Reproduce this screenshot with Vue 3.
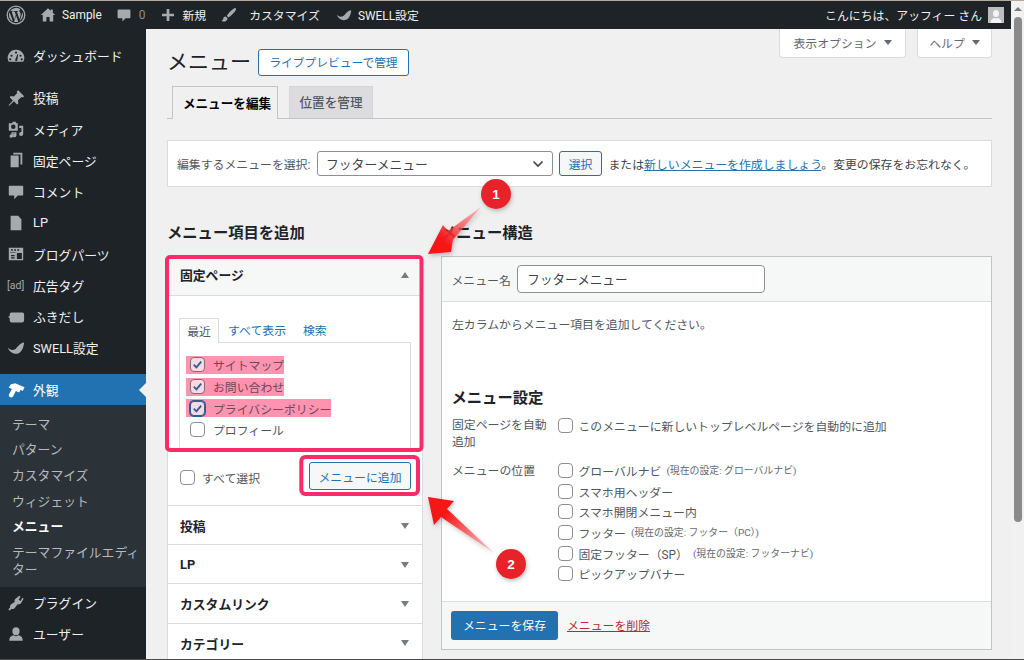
<script setup>
const icons = {
  dash: 'M10 3a9 9 0 0 0-8 13.500h16A9 9 0 0 0 10 3zM5 8.500a1.200 1.200 0 1 1 0 2.400 1.200 1.200 0 0 1 0-2.400zM10 5a1.200 1.200 0 1 1 0 2.400A1.200 1.200 0 0 1 10 5zM15 8.500a1.200 1.200 0 1 1 0 2.400 1.200 1.200 0 0 1 0-2.400zM3.600 12.500a1.200 1.200 0 1 1 0 2.400 1.200 1.200 0 0 1 0-2.400zM16.400 12.500a1.200 1.200 0 1 1 0 2.400 1.200 1.200 0 0 1 0-2.400zM9 14.500l2.600-6.500.8.300-1 6.700a1.300 1.300 0 0 1-2.400-.5z',
  pin: 'M12.500 1.500L19 8l-1.500 1.500-1.500-.7-3.800 3.700.3 3.500-1.300 1.200-3.500-3.500L2.500 18.500 1.800 18l4.700-5.300L3 9.200l1.200-1.300 3.500.3 3.700-3.800-.7-1.500z',
  media: 'M2 3.500h3.500l1-1.500h3l1 1.500H12v8.500H2zM7 5a2.500 2.500 0 1 0 0 5 2.500 2.500 0 0 0 0-5zM13.500 6.500H18v9a2.300 2.300 0 1 1-2-2.200V9h-2.500zM5 13.500h5.500v3.800a2 2 0 1 1-1.800-2V15H6.800v2.800a2 2 0 1 1-1.800-2z',
  pages: 'M7 2h10v13h-2V4H7zM4 5h9v13H4z',
  comment: 'M3 3h14a1 1 0 0 1 1 1v9a1 1 0 0 1-1 1h-5l-4 4v-4H3a1 1 0 0 1-1-1V4a1 1 0 0 1 1-1z',
  page: 'M4 2h8.500L16 6v12H4z',
  parts: 'M2 3h16v14H2zM4.500 4.800v1.700h2V4.800zM8 4.800v1.700h2V4.800zM11.500 4.800v1.700h2V4.800zM3.500 8v.5h6V8zM11 9v6.500h5.500V9zM4.500 11v1.500h4V11zM4.500 13.500V15h4v-1.500z',
  balloon: 'M5 5h12a2 2 0 0 1 2 2v7a2 2 0 0 1-2 2H5a2 2 0 0 1-2-2v-3l-2-1 2-1V7a2 2 0 0 1 2-2z',
  swell: 'M1 9.500c2 3 6 3.500 8.500 1.500S14 4.500 19 4c-.5 5.500-2.500 10.500-6.500 12C8 17.500 2.500 15 1 9.500z',
  hammer: 'M9 2.500L19.500 7l-2 4-2.500-1.200-1.500 3L9.800 11 7 16.800c-.6 1.300-1.900 1.800-3.200 1.200-1.600-.7-2.200-2-1.500-3.300L5.500 9 2 7.300 4 3.800z',
  plugin: 'M13.500 2l1.500 1-2 3.500 2 1.200 2-3.500 1.500 1-2.200 3.800c-.6 2-2.500 3-4.500 2.500L9 15c-1 1.500-2.500 2-4 1.500L3 18.500 1.500 17l2-2c-.5-1.500 0-3 1.500-4l3.500-2.200c-.5-2 .5-3.500 2.500-4.500z',
  user: 'M10 2.500a4 4.500 0 1 1 0 9 4 4.500 0 0 1 0-9zM7 11.500c2 1.200 4 1.200 6 0 3 .8 4.500 2.500 4.500 6H2.500c0-3.500 1.500-5.200 4.500-6z',
  home: 'M10 1.500l3.500 3.300V3h2.500v4.200L19 10h-2.500v8h-4.500v-5.500H8V18H3.500v-8H1z',
  plus: 'M8.300 2.500h3.400v5.800h5.800v3.400h-5.800v5.800H8.300v-5.800H2.500V8.300h5.800z',
  brush: 'M18 1.500c-3.500 2-7.500 6-9.500 9.500l2 2c3.500-2 7.500-6 9.500-9.500.6-1.200-.8-2.600-2-2zM7.500 12c-2.500 0-3.500 1.500-3.500 3 0 1-1 2-2.500 2 2.500 2.500 7.500 1.500 8-2.500z'
}
const topMenu = [
  { i: 'dash', t: 'ダッシュボード', cls: 'first' },
  { i: 'pin', t: '投稿', cls: 'gap' },
  { i: 'media', t: 'メディア' },
  { i: 'pages', t: '固定ページ' },
  { i: 'comment', t: 'コメント' },
  { i: 'page', t: 'LP' },
  { i: 'parts', t: 'ブログパーツ' },
  { i: 'ad', t: '広告タグ' },
  { i: 'balloon', t: 'ふきだし' },
  { i: 'swell', t: 'SWELL設定' }
]
const subMenu = ['テーマ', 'パターン', 'カスタマイズ', 'ウィジェット', 'メニュー', 'テーマファイルエディター']
const pageItems = [
  { t: 'サイトマップ', mark: true, on: true },
  { t: 'お問い合わせ', mark: true, on: true },
  { t: 'プライバシーポリシー', mark: true, on: true, focus: true },
  { t: 'プロフィール', mark: false, on: false }
]
const accItems = ['投稿', 'LP', 'カスタムリンク', 'カテゴリー']
const locations = [
  { t: 'グローバルナビ', n: '(現在の設定: グローバルナビ)' },
  { t: 'スマホ用ヘッダー' },
  { t: 'スマホ開閉メニュー内' },
  { t: 'フッター', n: '(現在の設定: フッター（PC）)' },
  { t: '固定フッター（SP）', n: '(現在の設定: フッターナビ)' },
  { t: 'ピックアップバナー' }
]
</script>

<template>
  <div class="app">
    <div class="frame-top"></div>
    <div class="window">
      <div class="viewport">
        <header class="adminbar">
          <svg class="wp" viewBox="0 0 20 20">
            <circle cx="10" cy="10" r="8.800" fill="none" stroke="#a7aaad" stroke-width="1.300" />
            <path fill="#a7aaad" d="M3 10a7 7 0 0 0 3.900 6.300L3.600 7.200A7 7 0 0 0 3 10zM14.700 9.600c0-.9-.3-1.500-.6-2-.4-.6-.7-1.100-.7-1.700 0-.7.500-1.300 1.200-1.300h.1A7 7 0 0 0 4.100 6.200h.5c.7 0 1.900-.1 1.900-.1.400 0 .4.500 0 .6l-.8.100 2.600 7.600 1.500-4.600-1.100-3-.8-.1c-.4 0-.3-.6 0-.6 0 0 1.200.1 1.900.1s1.900-.1 1.900-.1c.4 0 .4.500 0 .6l-.8.100 2.500 7.500.7-2.400c.3-1 .6-1.700.6-2.300zM10.100 10.700L8 16.800a7 7 0 0 0 4.300-.1l-.1-.1zM16.100 6.700l.1.700c0 .7-.1 1.500-.5 2.500l-2.100 6.100a7 7 0 0 0 2.500-9.300z" />
          </svg>
          <svg class="ab-ic home" viewBox="0 0 20 20"><path :d="icons.home" /></svg>
          <span class="ab-t site">Sample</span>
          <svg class="ab-ic cmt" viewBox="0 0 20 20"><path :d="icons.comment" /></svg>
          <span class="ab-t zero">0</span>
          <svg class="ab-ic plus" viewBox="0 0 20 20"><path :d="icons.plus" /></svg>
          <span class="ab-t">新規</span>
          <svg class="ab-ic brush" viewBox="0 0 20 20"><path :d="icons.brush" /></svg>
          <span class="ab-t">カスタマイズ</span>
          <svg class="ab-ic swell" viewBox="0 0 20 20"><path :d="icons.swell" /></svg>
          <span class="ab-t">SWELL設定</span>
          <span class="ab-t hello">こんにちは、アッフィー さん</span>
          <span class="avatar">
            <svg viewBox="0 0 16 16"><rect width="16" height="16" fill="#bdbdbd" /><path fill="#f4f4f4" d="M8 3a3 3.500 0 1 1 0 7 3 3.500 0 0 1 0-7zM2.500 16c0-3 2-4.500 3.500-5 1.300.6 2.700.6 4 0 1.500.5 3.500 2 3.500 5z" /></svg>
          </span>
        </header>

        <div class="wrap">
          <aside class="sidebar">
            <div v-for="m in topMenu" :key="m.t" class="side-row" :class="m.cls">
              <span v-if="m.i === 'ad'" class="ad-ic">[ad]</span>
              <svg v-else class="side-ic" viewBox="0 0 20 20"><path :d="icons[m.i]" fill-rule="evenodd" /></svg>
              <span>{{ m.t }}</span>
            </div>
            <div class="side-row active">
              <svg class="side-ic" viewBox="0 0 20 20"><path :d="icons.hammer" /></svg>
              <span>外観</span>
              <i class="notch"></i>
            </div>
            <div class="submenu">
              <div v-for="s in subMenu" :key="s" class="sub-row" :class="{ cur: s === 'メニュー' }">{{ s }}</div>
            </div>
            <div class="side-row">
              <svg class="side-ic" viewBox="0 0 20 20"><path :d="icons.plugin" /></svg>
              <span>プラグイン</span>
            </div>
            <div class="side-row">
              <svg class="side-ic" viewBox="0 0 20 20"><path :d="icons.user" /></svg>
              <span>ユーザー</span>
            </div>
          </aside>

          <main class="main">
            <div class="screen-row">
              <span class="screen-btn">表示オプション<i class="caret"></i></span>
              <span class="screen-btn help">ヘルプ<i class="caret"></i></span>
            </div>
            <div class="title-row">
              <h1>メニュー</h1>
              <span class="outline-btn live">ライブプレビューで管理</span>
            </div>
            <nav class="tabs">
              <span class="tab on">メニューを編集</span>
              <span class="tab">位置を管理</span>
            </nav>
            <section class="manage">
              <span class="m-label">編集するメニューを選択:</span>
              <span class="select">フッターメニュー
                <svg viewBox="0 0 12 8"><path d="M1.500 1.500L6 6l4.500-4.500" fill="none" stroke="#3c434a" stroke-width="1.600" /></svg>
              </span>
              <span class="outline-btn small">選択</span>
              <span class="m-note">または<a>新しいメニューを作成しましょう</a>。変更の保存をお忘れなく。</span>
            </section>

            <div class="cols">
              <div class="left">
                <h2>メニュー項目を追加</h2>
                <div class="acc">
                  <div class="acc-head open">固定ページ<i class="tri up"></i></div>
                  <div class="acc-body">
                    <div class="in-tabs">
                      <span class="in-tab on">最近</span>
                      <a class="in-link">すべて表示</a>
                      <a class="in-link last">検索</a>
                    </div>
                    <div class="in-panel">
                      <div v-for="p in pageItems" :key="p.t" class="pick">
                        <span class="pick-in" :class="{ mark: p.mark }">
                          <span class="cb" :class="{ focus: p.focus, clear: p.mark }">
                            <svg v-if="p.on" viewBox="0 0 14 14"><path d="M3 7.200l2.800 2.800L11 4" fill="none" stroke="#2b5f96" stroke-width="2" /></svg>
                          </span>
                          {{ p.t }}
                        </span>
                      </div>
                    </div>
                    <div class="add-row">
                      <span class="all"><span class="cb"></span>すべて選択</span>
                      <span class="outline-btn add">メニューに追加</span>
                    </div>
                  </div>
                  <div v-for="a in accItems" :key="a" class="acc-head closed">{{ a }}<i class="tri"></i></div>
                </div>
              </div>

              <div class="right">
                <h2>メニュー構造</h2>
                <div class="box">
                  <div class="box-head">
                    <span>メニュー名</span>
                    <span class="name-input">フッターメニュー</span>
                  </div>
                  <p class="hint">左カラムからメニュー項目を追加してください。</p>
                  <h3>メニュー設定</h3>
                  <div class="setting auto">
                    <div class="s-label">固定ページを自動追加</div>
                    <div class="s-line"><span class="cb"></span>このメニューに新しいトップレベルページを自動的に追加</div>
                  </div>
                  <div class="setting">
                    <div class="s-label loc">メニューの位置</div>
                    <div>
                      <div v-for="l in locations" :key="l.t" class="s-line rowed">
                        <span class="cb"></span><span>{{ l.t }}</span><small v-if="l.n">{{ l.n }}</small>
                      </div>
                    </div>
                  </div>
                  <div class="box-foot">
                    <span class="save">メニューを保存</span>
                    <a class="del">メニューを削除</a>
                  </div>
                </div>
              </div>
            </div>
          </main>
        </div>
      </div>
      <div class="scrollbar">
        <i class="sb-up"></i>
        <i class="sb-thumb"></i>
      </div>
    </div>
    <div class="frame-bottom"></div>

    <svg class="marks" viewBox="0 0 1024 660">
      <defs>
        <linearGradient id="a1" gradientUnits="userSpaceOnUse" x1="430" y1="253" x2="482" y2="206">
          <stop offset="0.25" stop-color="#f71316" />
          <stop offset="0.55" stop-color="#f4474a" stop-opacity="0.75" />
          <stop offset="1" stop-color="#f7b3b5" stop-opacity="0.8" />
        </linearGradient>
        <linearGradient id="a2" gradientUnits="userSpaceOnUse" x1="430" y1="498" x2="495" y2="553">
          <stop offset="0.25" stop-color="#f71316" />
          <stop offset="1" stop-color="#f7c3c5" stop-opacity="0.85" />
        </linearGradient>
        <filter id="sh" x="-30%" y="-30%" width="160%" height="160%">
          <feDropShadow dx="1" dy="2" stdDeviation="2" flood-color="#000" flood-opacity="0.25" />
        </filter>
      </defs>
      <rect x="167" y="257" width="254.500" height="193" rx="3" class="hl" />
      <rect x="301.300" y="457" width="116.700" height="37" rx="4" class="hl" />
      <polygon points="428,254 443,225 448,231 481,207 453,240 451,252" fill="url(#a1)" filter="url(#sh)" />
      <polygon points="428,497 454,501 447,509 494,553 441,517 434,525" fill="url(#a2)" filter="url(#sh)" />
      <circle cx="496" cy="194" r="15" fill="#e8242c" filter="url(#sh)" />
      <circle cx="511" cy="564" r="15" fill="#e8242c" filter="url(#sh)" />
      <text x="496" y="199" class="num">1</text>
      <text x="511" y="569" class="num">2</text>
    </svg>
  </div>
</template>

<style>
html, body { margin: 0; background: #f0f0f1; }
</style>

<style scoped>
.app {
  width: 1024px; height: 660px; position: relative; overflow: hidden;
  display: flex; flex-direction: column; background: #f0f0f1;
  font-family: Roboto, "Noto Sans CJK JP", "Liberation Sans", sans-serif;
  font-size: 11.860px; color: #3c434a;
}
.frame-top { height: 1px; background: #b5a99c; flex: none; }
.frame-bottom { height: 1px; background: #4a4a4a; flex: none; }
.window { flex: 1; display: flex; min-height: 0; }
.viewport { width: 1011px; display: flex; flex-direction: column; min-height: 0; }

.adminbar { height: 28px; flex: none; background: #1d2327; display: flex; align-items: center; color: #f0f0f1; padding-right: 7px; }
.adminbar svg { flex: none; display: block; }
.wp { width: 20px; height: 20px; margin-left: 6px; }
.ab-ic { fill: #a7aaad; width: 16px; height: 16px; }
.home { margin-left: 14px; margin-right: 6px; }
.cmt { margin-left: 14px; }
.zero { margin-left: 7px; color: #8c8f94; }
.plus { margin-left: 15px; margin-right: 6px; }
.brush { margin-left: 14px; margin-right: 13px; }
.swell { margin-left: 16px; margin-right: 6px; }
.ab-t { white-space: nowrap; padding-bottom: 1px; }
.hello { margin-left: auto; margin-right: 6px; }
.avatar { width: 16px; height: 16px; display: block; }
.avatar svg { width: 16px; height: 16px; }

.wrap { flex: 1; display: flex; min-height: 0; }
.sidebar { width: 146px; flex: none; background: #1d2327; color: #f0f0f1; font-size: 12.800px; padding-top: 11px; overflow: hidden; }
.side-row { height: 31.250px; display: flex; align-items: center; position: relative; padding-left: 7px; }
.side-row.gap { margin-top: 11px; }
.side-row.active { background: #2271b1; color: #fff; margin-top: 10.500px; height: 31px; }
.side-row.active .side-ic { fill: #fff; }
.side-ic { width: 18px; height: 18px; fill: #a7aaad; margin-right: 8px; flex: none; }
.ad-ic { width: 25px; flex: none; font-size: 10.500px; color: #a7aaad; margin-right: 1px; white-space: nowrap; }
.notch { position: absolute; right: 0; top: 9px; border: 7px solid transparent; border-right-color: #f0f0f1; border-left-width: 0; }
.submenu { background: #2c3338; padding: 7px 0 4.300px; }
.sub-row { line-height: 16.500px; padding: 4.600px 6px 4.600px 12px; color: #b5b9bd; }
.sub-row.cur { color: #fff; font-weight: 700; }

.main { flex: 1; min-width: 0; padding: 0 19px 0 21px; position: relative; overflow: hidden; }
.screen-row { display: flex; justify-content: flex-end; gap: 11px; height: 29px; margin-bottom: -9px; }
.screen-btn { width: 127px; height: 29px; box-sizing: border-box; padding-bottom: 2px; background: #fff; border: 1px solid #dcdcde; border-top: 0; border-radius: 0 0 4px 4px; color: #646970; display: flex; align-items: center; justify-content: center; }
.screen-btn.help { width: 75px; }
.caret { margin-left: 7px; border: 4px solid transparent; border-top: 5px solid #646970; border-bottom: 0; }
.title-row { display: flex; align-items: center; height: 27px; }
h1 { margin: 0; font-size: 21px; font-weight: 400; color: #1d2327; line-height: 27px; width: 91px; }
.outline-btn { box-sizing: border-box; height: 27px; padding: 0 11px; display: inline-flex; align-items: center; border: 1px solid #2271b1; border-radius: 3px; background: #fff; color: #2271b1; white-space: nowrap; }
.outline-btn.live { width: 151px; padding: 0 0 2px; justify-content: center; font-size: 11.730px; }
.tabs { margin-top: 10px; height: 33px; box-sizing: border-box; border-bottom: 1px solid #c3c4c7; padding-left: 5px; display: flex; gap: 11px; }
.tab { box-sizing: border-box; height: 32px; width: 84px; padding: 0 0 2px; justify-content: center; display: flex; align-items: center; background: #dcdcde; border: 1px solid #d5d5d8; border-bottom: 0; color: #50575e; font-size: 12.600px; font-weight: 500; white-space: nowrap; }
.tab.on { height: 33px; width: 106px; padding-left: 4px; background: #f0f0f1; border-color: #c3c4c7; color: #000; font-weight: 700; }
.manage { margin-top: 21px; height: 47px; box-sizing: border-box; background: #fff; border: 1px solid #dcdcde; display: flex; align-items: center; padding-left: 9px; white-space: nowrap; }
.m-label { width: 140px; color: #50575e; }
.select { box-sizing: border-box; width: 236px; height: 25px; border: 1px solid #8c8f94; border-radius: 3px; display: flex; align-items: center; justify-content: space-between; padding: 0 8px; font-size: 12.800px; }
.select svg { width: 12px; height: 8px; }
.outline-btn.small { height: 25px; width: 43px; justify-content: center; margin-left: 6px; padding: 0; background: #f6f7f7; }
.m-note { margin-left: 6.500px; }
.m-note a { color: #2271b1; text-decoration: underline; }

.cols { display: flex; gap: 18px; align-items: flex-start; }
.left { width: 256px; flex: none; }
.right { flex: 1; min-width: 0; }
h2 { margin: 34px 0 11px; font-size: 15.300px; line-height: 24px; font-weight: 700; color: #1d2327; white-space: nowrap; }
.acc { box-sizing: border-box; background: #fff; border: 1px solid #dcdcde; }
.acc-head { height: 39px; box-sizing: border-box; display: flex; align-items: center; justify-content: space-between; padding: 0 13px 1px 12px; font-size: 12.800px; font-weight: 700; color: #1d2327; border-bottom: 1px solid #dcdcde; }
.acc-head.open { background: #f6f7f7; padding-bottom: 3px; }
.tri { border: 4px solid transparent; border-top: 6px solid #787c82; border-bottom: 0; }
.tri.up { border-top: 0; border-bottom: 6px solid #787c82; }
.acc-body { padding: 22px 11px 0; height: 210px; box-sizing: border-box; border-bottom: 1px solid #dcdcde; }
.in-tabs { display: flex; height: 24px; align-items: center; color: #2271b1; padding-bottom: 2px; box-sizing: border-box; }
.in-tab { box-sizing: border-box; width: 40px; height: 25px; margin-bottom: -3px; padding-bottom: 2px; position: relative; display: flex; align-items: center; justify-content: center; background: #fff; border: 1px solid #dcdcde; border-bottom: 0; color: #50575e; }
.in-link { margin-left: 9px; }
.in-link.last { margin-left: 17px; }
.in-panel { box-sizing: border-box; height: 109px; border: 1px solid #dcdcde; border-bottom: 0; padding: 11px 0 0 6px; color: #50575e; }
.pick { height: 21.700px; display: flex; align-items: center; }
.pick-in { display: inline-flex; align-items: center; height: 18px; padding: 0 0 0 4px; }
.pick-in.mark { background: #ff93b0; color: #6a4a58; }
.cb { box-sizing: border-box; width: 15px; height: 15px; flex: none; display: inline-flex; margin-right: 8px; background: #fff; border: 1px solid #8c8f94; border-radius: 4px; }
.cb svg { width: 13px; height: 13px; display: block; }
.cb.clear { background: #fbd9e3; border-color: #8a6a78; }
.cb.focus { border-color: #2b5f96; box-shadow: 0 0 0 1px #2b5f96; }
.add-row { display: flex; align-items: center; justify-content: space-between; margin-top: 11px; }
.all { display: flex; align-items: center; color: #50575e; padding-left: 1px; padding-top: 3px; }
.all .cb { margin-right: 7px; }
.outline-btn.add { width: 102px; height: 28px; padding: 0; justify-content: center; background: #f6f7f7; }
.acc-head.closed { height: 39.200px; padding-top: 1px; padding-bottom: 0; }

.box { box-sizing: border-box; height: 394px; background: #fff; border: 1px solid #c3c4c7; display: flex; flex-direction: column; }
.box-head { height: 45px; flex: none; box-sizing: border-box; display: flex; align-items: center; background: #f6f7f7; border-bottom: 1px solid #dcdcde; padding: 0 0 0 9.500px; color: #50575e; }
.name-input { box-sizing: border-box; width: 248px; height: 28px; margin-left: 6.500px; background: #fff; border: 1px solid #8c8f94; border-radius: 4px; display: flex; align-items: center; padding-left: 9px; padding-bottom: 1px; font-size: 12.600px; color: #3c434a; }
.hint { margin: 14px 0 0 10px; line-height: 18px; color: #50575e; flex: none; }
h3 { margin: 53px 0 0 9.500px; font-size: 15.300px; line-height: 22px; font-weight: 700; color: #1d2327; flex: none; }
.setting { display: grid; grid-template-columns: 106px 1fr; margin-left: 10px; color: #50575e; flex: none; }
.setting.auto { margin-top: 8px; margin-bottom: 13px; }
.s-label { line-height: 16.500px; padding-right: 4px; }
.s-line { display: flex; align-items: center; white-space: pre; height: 16.500px; }
.s-line.rowed { height: 20.700px; margin-top: -3px; margin-bottom: 3px; }
.s-line .cb { margin-right: 5.500px; }
.s-line small { font-size: 9.900px; margin-left: 5px; color: #646970; }
.box-foot { margin-top: auto; height: 48px; flex: none; box-sizing: border-box; background: #f6f7f7; border-top: 1px solid #dcdcde; display: flex; align-items: center; padding-left: 9px; }
.save { width: 107px; height: 29px; box-sizing: border-box; padding-bottom: 2px; display: flex; align-items: center; justify-content: center; background: #2271b1; color: #fff; border-radius: 3px; }
.del { margin-left: 9px; color: #b32d2e; text-decoration: underline; padding-bottom: 2px; }

.scrollbar { width: 13px; flex: none; background: #f1f1f1; position: relative; display: flex; flex-direction: column; align-items: center; }
.sb-up { margin-top: 6px; border: 4px solid transparent; border-top: 0; border-bottom: 4px solid #7a7a7a; }
.sb-thumb { width: 8px; height: 505px; margin-top: 6px; background: #8a8a8a; border-radius: 4px; }

.marks { position: absolute; left: 0; top: 0; width: 1024px; height: 660px; pointer-events: none; }
.hl { fill: none; stroke: #fb2b6a; stroke-width: 4; }
.num { fill: #fff; font-size: 13.500px; font-weight: 700; text-anchor: middle; font-family: "Liberation Sans", sans-serif; }
</style>
